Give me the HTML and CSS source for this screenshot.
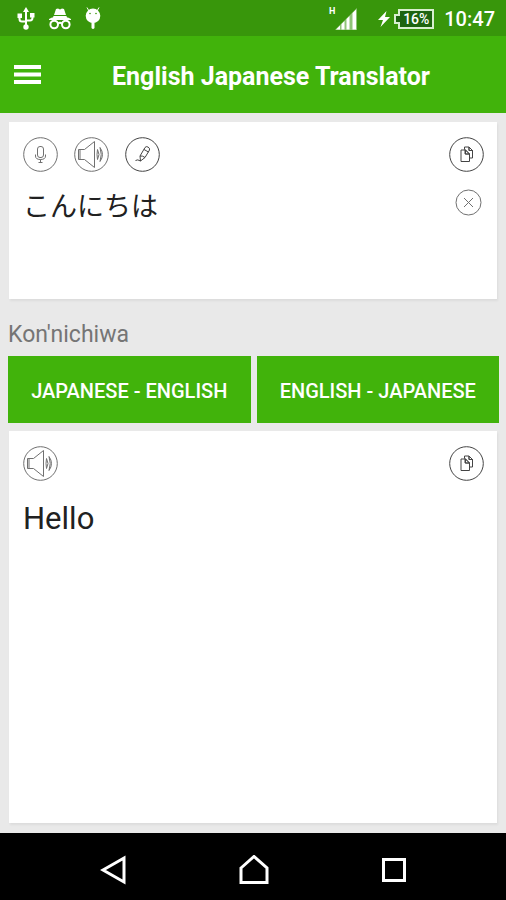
FILE: index.html
```html
<!DOCTYPE html>
<html lang="en">
<head>
<meta charset="utf-8">
<meta name="viewport" content="width=device-width, initial-scale=1">
<title>English Japanese Translator</title>
<link rel="stylesheet" href="styles.css">
</head>
<body>
<svg class="sprite" aria-hidden="true">
  <symbol id="speaker" viewBox="0 0 35 35">
    <circle cx="17.500" cy="17.500" r="16.800"/>
    <path d="M4.500 12.500H10.500L20.500 4.500V30.500L10.500 22.500H4.500ZM6 12.500V22.500M23.500 12.500Q26.500 17.500 23.500 22.500Q22.500 17.500 23.500 12.500M26 10.500Q31 17.500 26 24.500Q28.500 17.500 26 10.500"/>
  </symbol>
  <symbol id="copy" viewBox="0 0 35 35">
    <circle cx="17.500" cy="17.500" r="16.800"/>
    <path d="M15.500 12.500V10H20L23.500 13.500V21H20.500M20 10V13.500H23.500M12 13H16.500L20.500 17V24.500H12ZM16.500 13V17H20.500"/>
    <path class="solid" d="M16 12.500 20.500 17H16ZM20 10 23.500 13.500H20Z"/>
  </symbol>
</svg>

<header>
  <div class="status">
    <div class="status-group notices">
      <svg width="18" height="24" viewBox="0 0 18 24" aria-label="USB connected">
        <path class="line" d="M9 4V20M2.500 10V12Q2.500 14.500 5 14.500H9M15.500 8V10.500Q15.500 13.500 13 13.500H9"/>
        <path class="fill" d="M9 0 12 5H6ZM.500 6.500H5V11H.500ZM13 6H17.500V10.500H13Z"/><circle class="fill" cx="9" cy="20" r="2.700"/>
      </svg>
      <svg width="24" height="22" viewBox="0 0 24 22" aria-label="Incognito">
        <path class="fill" d="M6 7 8 1 10 .500 12 1.500 14 .500 16 1 18 7ZM5.500 8H18.500L19 9.500H5ZM1 11 4 9.500H20L23 11V12H1Z"/>
        <circle class="line" cx="6.200" cy="16.500" r="3.800"/><circle class="line" cx="17.800" cy="16.500" r="3.800"/>
        <path class="line" d="M10 15.500Q12 14 14 15.500"/>
      </svg>
      <svg width="16" height="24" viewBox="0 0 16 24" aria-label="Debugging">
        <path class="thin" d="M4 4 2 .500M12 4 14 .500"/>
        <circle class="fill" cx="8" cy="8.800" r="7.300"/><path class="fill" d="M6.500 15H9.500V21Q8 23 6.500 21Z"/>
        <circle class="eye" cx="5" cy="6.500" r=".8"/><circle class="eye" cx="11" cy="6.500" r=".8"/>
      </svg>
    </div>
    <div class="status-group">
      <span class="network">H</span>
      <svg class="signal" width="22" height="22" viewBox="0 0 22 22" aria-label="Signal">
        <path class="faded" d="M0 22 22 0V22Z"/>
        <path class="fill" d="M1 21.500 5 17.500V21.500ZM6.500 16 9.500 13V21.500H6.500ZM11.500 11 14.500 8V21.500H11.500ZM17.500 5 21 1.500V21.500H17.500Z"/>
      </svg>
      <svg class="bolt" width="12" height="16" viewBox="0 0 12 16" aria-label="Charging"><path class="fill" d="M8.500 0 0 9H5L2.500 16 12 6H7Z"/></svg>
      <span class="battery">
        <svg width="40" height="20" viewBox="0 0 40 20" aria-hidden="true"><path d="M5 1H39V19H5V14H1V6H5Z"/></svg>
        <span class="level">16%</span>
      </span>
      <time class="clock">10:47</time>
    </div>
  </div>
  <div class="appbar">
    <button class="menu" aria-label="Open menu"><svg width="27" height="19" viewBox="0 0 27 19"><path class="fill" d="M0 0H27V4H0ZM0 7.500H27V11.500H0ZM0 15H27V19H0Z"/></svg></button>
    <h1>English Japanese Translator</h1>
  </div>
</header>

<main>
  <section class="card source">
    <div class="tools">
      <button class="icon" aria-label="Speak"><svg viewBox="0 0 35 35"><circle cx="17.500" cy="17.500" r="16.800"/><rect x="14.500" y="9.500" width="6" height="11" rx="2.500"/><path d="M12.500 17.500V19Q12.500 22.500 17.500 22.500T22.500 19V17.500M17.500 22.500V25.500M15.500 25.500H19.500"/></svg></button>
      <button class="icon" aria-label="Listen to source"><svg><use href="#speaker"/></svg></button>
      <button class="icon dark" aria-label="Handwriting"><svg viewBox="0 0 35 35"><circle cx="17.500" cy="17.500" r="16.800"/><path d="M15 19 20 10.500Q21 9 23 10T24.500 13L20 20.500 15.500 24ZM19 12.500 23.500 15M15 19Q17.500 18.500 20 20.500M10.500 23.500Q12.500 22 15.500 24"/></svg></button>
      <button class="icon dark last" aria-label="Copy source"><svg><use href="#copy"/></svg></button>
    </div>
    <div class="entry">
      <textarea aria-label="Text to translate" lang="ja" spellcheck="false" rows="2">こんにちは</textarea>
      <button class="icon clear" aria-label="Clear text"><svg viewBox="0 0 27 27"><circle cx="13.500" cy="13.500" r="12.500"/><path d="M9 9 18 18M18 9 9 18"/></svg></button>
    </div>
  </section>
  <p class="reading">Kon'nichiwa</p>
  <div class="directions">
    <button>JAPANESE - ENGLISH</button>
    <button>ENGLISH - JAPANESE</button>
  </div>
  <section class="card result">
    <div class="tools">
      <button class="icon" aria-label="Listen to translation"><svg><use href="#speaker"/></svg></button>
      <button class="icon dark last" aria-label="Copy translation"><svg><use href="#copy"/></svg></button>
    </div>
    <p class="translation">Hello</p>
  </section>
</main>

<nav>
  <button aria-label="Back"><svg width="28" height="30" viewBox="0 0 28 30"><path d="M3 15 24 3V27Z"/></svg></button>
  <button aria-label="Home"><svg width="30" height="30" viewBox="0 0 30 30"><path d="M2 13 15 1.500 28 13V27.500H2Z"/></svg></button>
  <button aria-label="Recent apps"><svg width="28" height="30" viewBox="0 0 28 30"><path d="M3.500 4.500H24.500V25.500H3.500Z"/></svg></button>
</nav>
</body>
</html>
```
FILE: styles.css
```css
* { box-sizing: border-box; }

body {
  margin: 0;
  min-height: 100vh;
  display: flex;
  flex-direction: column;
  background: #e9e9e9;
  color: #212121;
  font-family: Roboto, "Noto Sans CJK JP", sans-serif;
}

h1, p { margin: 0; }
svg { display: block; flex: none; }
button {
  padding: 0;
  border: 0;
  background: none;
  color: inherit;
  font: inherit;
  cursor: pointer;
}
.sprite { position: absolute; width: 0; height: 0; }
.fill { fill: #fff; }

/* Status bar */
.status {
  height: 36px;
  padding: 2px 11px 0 17px;
  display: flex;
  align-items: center;
  justify-content: space-between;
  background: #38960b;
  color: #fff;
}
.status-group { display: flex; align-items: center; }
.notices { gap: 13px; }
.status .line { fill: none; stroke: #fff; stroke-width: 2; }
.status .thin { stroke: #fff; stroke-width: 1; }
.eye { fill: #38960b; }
.faded { fill: #8fc478; }
.network { align-self: flex-start; font-size: 9px; line-height: 8px; font-weight: 700; }
.bolt { margin: 0 4px 0 21px; }
.battery { display: grid; place-items: center; margin-right: 10px; }
.battery > * { grid-area: 1 / 1; }
.battery path { fill: #1d6410; stroke: #d8efd0; stroke-width: 2; }
.level { padding-left: 4px; font-size: 14px; line-height: 20px; font-weight: 500; }
.clock { font-size: 20px; line-height: 24px; font-weight: 500; }

/* App bar */
.appbar {
  height: 77px;
  padding: 0 14px;
  display: flex;
  align-items: center;
  background: #41b30b;
  color: #fff;
}
.menu { width: 28px; }
h1 {
  flex: 1;
  padding: 4px 0 0 8px;
  text-align: center;
  font-size: 25px;
  line-height: 32px;
  font-weight: 700;
}

/* Content */
main {
  flex: 1;
  padding: 9px 7px 10px 8px;
  display: flex;
  flex-direction: column;
}
.card {
  margin: 0 2px 0 1px;
  padding: 15px 13px 12px 14px;
  background: #fff;
  box-shadow: 1px 2px 2px #dcdcdc;
}
.result { flex: 1; }
.tools { display: flex; gap: 16px; }
.last { margin-left: auto; }
.icon { width: 35px; height: 35px; }
.icon svg {
  width: 100%;
  height: 100%;
  fill: none;
  stroke: #707070;
  stroke-width: 1;
}
.dark svg { stroke: #444; }
.icon .solid { fill: #777; }
.entry { display: flex; align-items: flex-start; padding-top: 15px; }
textarea {
  flex: 1;
  min-width: 0;
  height: 100px;
  padding: 0;
  border: 0;
  outline: 0;
  resize: none;
  background: none;
  color: #212121;
  font-family: Roboto, "Noto Sans CJK JP", sans-serif;
  font-size: 27px;
  line-height: 40px;
}
.clear { width: 27px; height: 27px; margin: 2px 2px 0 0; }
.reading {
  padding: 22px 0 7px;
  color: #757575;
  font-size: 23px;
  line-height: 28px;
}
.directions { display: flex; gap: 6px; margin-bottom: 8px; }
.directions button {
  flex: 1;
  height: 67px;
  padding-top: 2px;
  background: #41b30b;
  color: #fff;
  font-size: 20px;
  font-weight: 500;
}
.translation { padding-top: 18px; font-size: 31px; line-height: 40px; }

/* System navigation */
nav {
  height: 67px;
  padding: 6px 42px 0 44px;
  display: flex;
  background: #000;
}
nav button { flex: 1; display: grid; place-items: center; }
nav path { fill: none; stroke: #fff; stroke-width: 3; }
```
